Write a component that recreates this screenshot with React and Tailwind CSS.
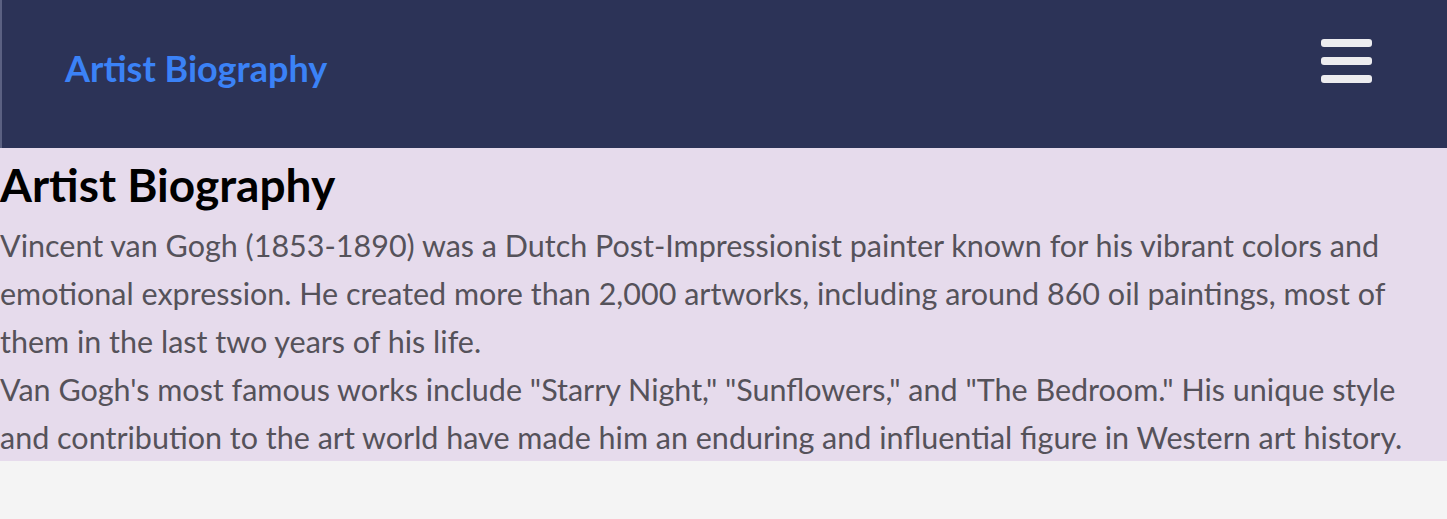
export default function App() {
  return (
    <div className="min-h-[519px] bg-[#f4f4f4] font-['Lato','Open_Sans',sans-serif]">
      <header className="flex h-[148px] items-center justify-between border-l-2 border-[#5b6182] bg-[#2c3357] pl-[63px] pr-[75px]">
        <a href="#" className="-mt-[12px] text-[36px] font-bold leading-none text-[#3b82f6]">
          Artist Biography
        </a>
        <button className="-mt-[27px] flex w-[51px] flex-col gap-[10px]" aria-label="Menu">
          <span className="block h-[8px] rounded-[3px] bg-[#ececef]" />
          <span className="block h-[8px] rounded-[3px] bg-[#ececef]" />
          <span className="block h-[8px] rounded-[3px] bg-[#ececef]" />
        </button>
      </header>
      <main className="bg-[#e6dbec]">
        <h1 className="text-[46px] font-bold leading-[73px] text-black">Artist Biography</h1>
        <p className="text-[30.5px] leading-[48px] text-[#55525a]">
          Vincent van Gogh (1853-1890) was a Dutch Post-Impressionist painter known for his vibrant colors and
          emotional expression. He created more than 2,000 artworks, including around 860 oil paintings, most of
          them in the last two years of his life.
        </p>
        <p className="text-[30.5px] leading-[48px] text-[#55525a]">
          Van Gogh's most famous works include "Starry Night," "Sunflowers," and "The Bedroom." His unique style
          and contribution to the art world have made him an enduring and influential figure in Western art history.
        </p>
      </main>
    </div>
  );
}
